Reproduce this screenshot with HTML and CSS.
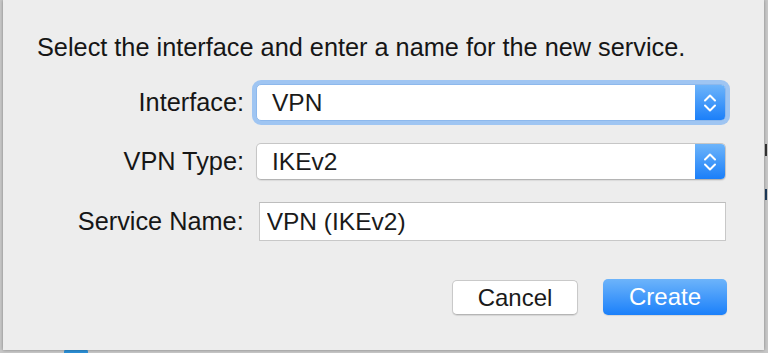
FILE: index.html
```html
<!DOCTYPE html>
<html lang="en">
<head>
    <meta charset="UTF-8">
    <title>New Service</title>
    <link rel="stylesheet" href="styles.css">
</head>
<body>

<div class="backdrop">
    <div class="bg-tab"></div>
    <div class="bg-mark bg-a"></div>
    <div class="bg-mark bg-r"></div>

    <div class="sheet">
        <p class="intro">Select the interface and enter a name for the new service.</p>

        <div class="row">
            <label class="label">Interface:</label>
            <div class="popup focused">
                <span class="popup-value">VPN</span>
                <span class="stepper">
                    <svg width="14" height="20" viewBox="0 0 14 20">
                        <path d="M2 7.5 L7 2.5 L12 7.5" />
                        <path d="M2 12.5 L7 17.5 L12 12.5" />
                    </svg>
                </span>
            </div>
        </div>

        <div class="row">
            <label class="label">VPN Type:</label>
            <div class="popup">
                <span class="popup-value">IKEv2</span>
                <span class="stepper">
                    <svg width="14" height="20" viewBox="0 0 14 20">
                        <path d="M2 7.5 L7 2.5 L12 7.5" />
                        <path d="M2 12.5 L7 17.5 L12 12.5" />
                    </svg>
                </span>
            </div>
        </div>

        <div class="row row-name">
            <label class="label" for="service_name">Service Name:</label>
            <input class="text-field" id="service_name" type="text" value="VPN (IKEv2)">
        </div>

        <div class="buttons">
            <button class="btn">Cancel</button>
            <button class="btn btn-default">Create</button>
        </div>
    </div>
</div>

</body>
</html>
```

FILE: styles.css
```css
body {
    margin: 0;
    padding: 0;
    font-family: 'Liberation Sans', Arial, sans-serif;
    background: #c9c9c9;
    overflow: hidden;
}

.backdrop {
    position: relative;
    width: 768px;
    height: 353px;
    overflow: hidden;
    background: #c7c7c7;
}

/* bits of the window behind the sheet */
.bg-tab {
    position: absolute;
    left: 64px;
    top: 349px;
    width: 24px;
    height: 8px;
    background: #2b8fd6;
    border-radius: 3px;
}

.bg-mark {
    position: absolute;
    left: 765px;
    width: 2px;
    background: #333;
}

.bg-a { top: 144px; height: 12px; }
.bg-r { top: 189px; height: 11px; background: #1d3a5a; }

.sheet {
    position: relative;
    margin-left: 3px;
    width: 761px;
    height: 350px;
    box-sizing: border-box;
    padding: 33px 38px 0 34px;
    background: #ededed;
    box-shadow: 0 0 3px rgba(0, 0, 0, 0.35);
}

.intro {
    margin: 0 0 23px 0;
    font-size: 25.3px;
    line-height: 28px;
    color: #161616;
    white-space: nowrap;
}

.row {
    display: flex;
    align-items: center;
    margin-bottom: 22px;
}

.row-name {
    margin-bottom: 39px;
}

.label {
    width: 207px;
    text-align: right;
    margin-right: 12px;
    font-size: 25.3px;
    color: #161616;
}

.popup {
    display: flex;
    width: 470px;
    height: 37px;
    box-sizing: border-box;
    background: #fff;
    border: 1px solid #c6c6c6;
    border-bottom-color: #b4b4b4;
    border-radius: 5px;
    overflow: hidden;
    box-shadow: 0 1px 1px rgba(0, 0, 0, 0.08);
}

.popup.focused {
    border-color: #8db8ec;
    box-shadow: 0 0 0 4px #9fc5f2;
}

.popup-value {
    flex: 1;
    padding-left: 15px;
    font-size: 24.5px;
    line-height: 35px;
    color: #1a1a1a;
}

.stepper {
    width: 30px;
    display: flex;
    align-items: center;
    justify-content: center;
    background: linear-gradient(#6db4fa, #1b7ff9);
}

.stepper path {
    fill: none;
    stroke: #fff;
    stroke-width: 2;
    stroke-linecap: round;
    stroke-linejoin: round;
}

.text-field {
    width: 468px;
    height: 39px;
    box-sizing: border-box;
    margin: 0 0 0 3px;
    padding: 0 0 0 7px;
    border: 1px solid #c8c8c8;
    border-top-color: #bdbdbd;
    background: #fff;
    font-family: 'Liberation Sans', Arial, sans-serif;
    font-size: 24.5px;
    color: #1a1a1a;
    outline: none;
}

.buttons {
    display: flex;
    justify-content: flex-end;
    gap: 25px;
    margin-right: -1px;
}

.btn {
    width: 126px;
    height: 35px;
    padding: 0;
    border: 1px solid #c9c9c9;
    border-bottom-color: #b5b5b5;
    border-radius: 5px;
    background: #fff;
    font-family: 'Liberation Sans', Arial, sans-serif;
    font-size: 24px;
    color: #1a1a1a;
    box-shadow: 0 1px 1px rgba(0, 0, 0, 0.1);
}

.btn-default {
    width: 124px;
    height: 36px;
    margin-top: -1px;
    border: none;
    color: #fff;
    background: linear-gradient(#6db4fa, #1b80fa);
}
```
